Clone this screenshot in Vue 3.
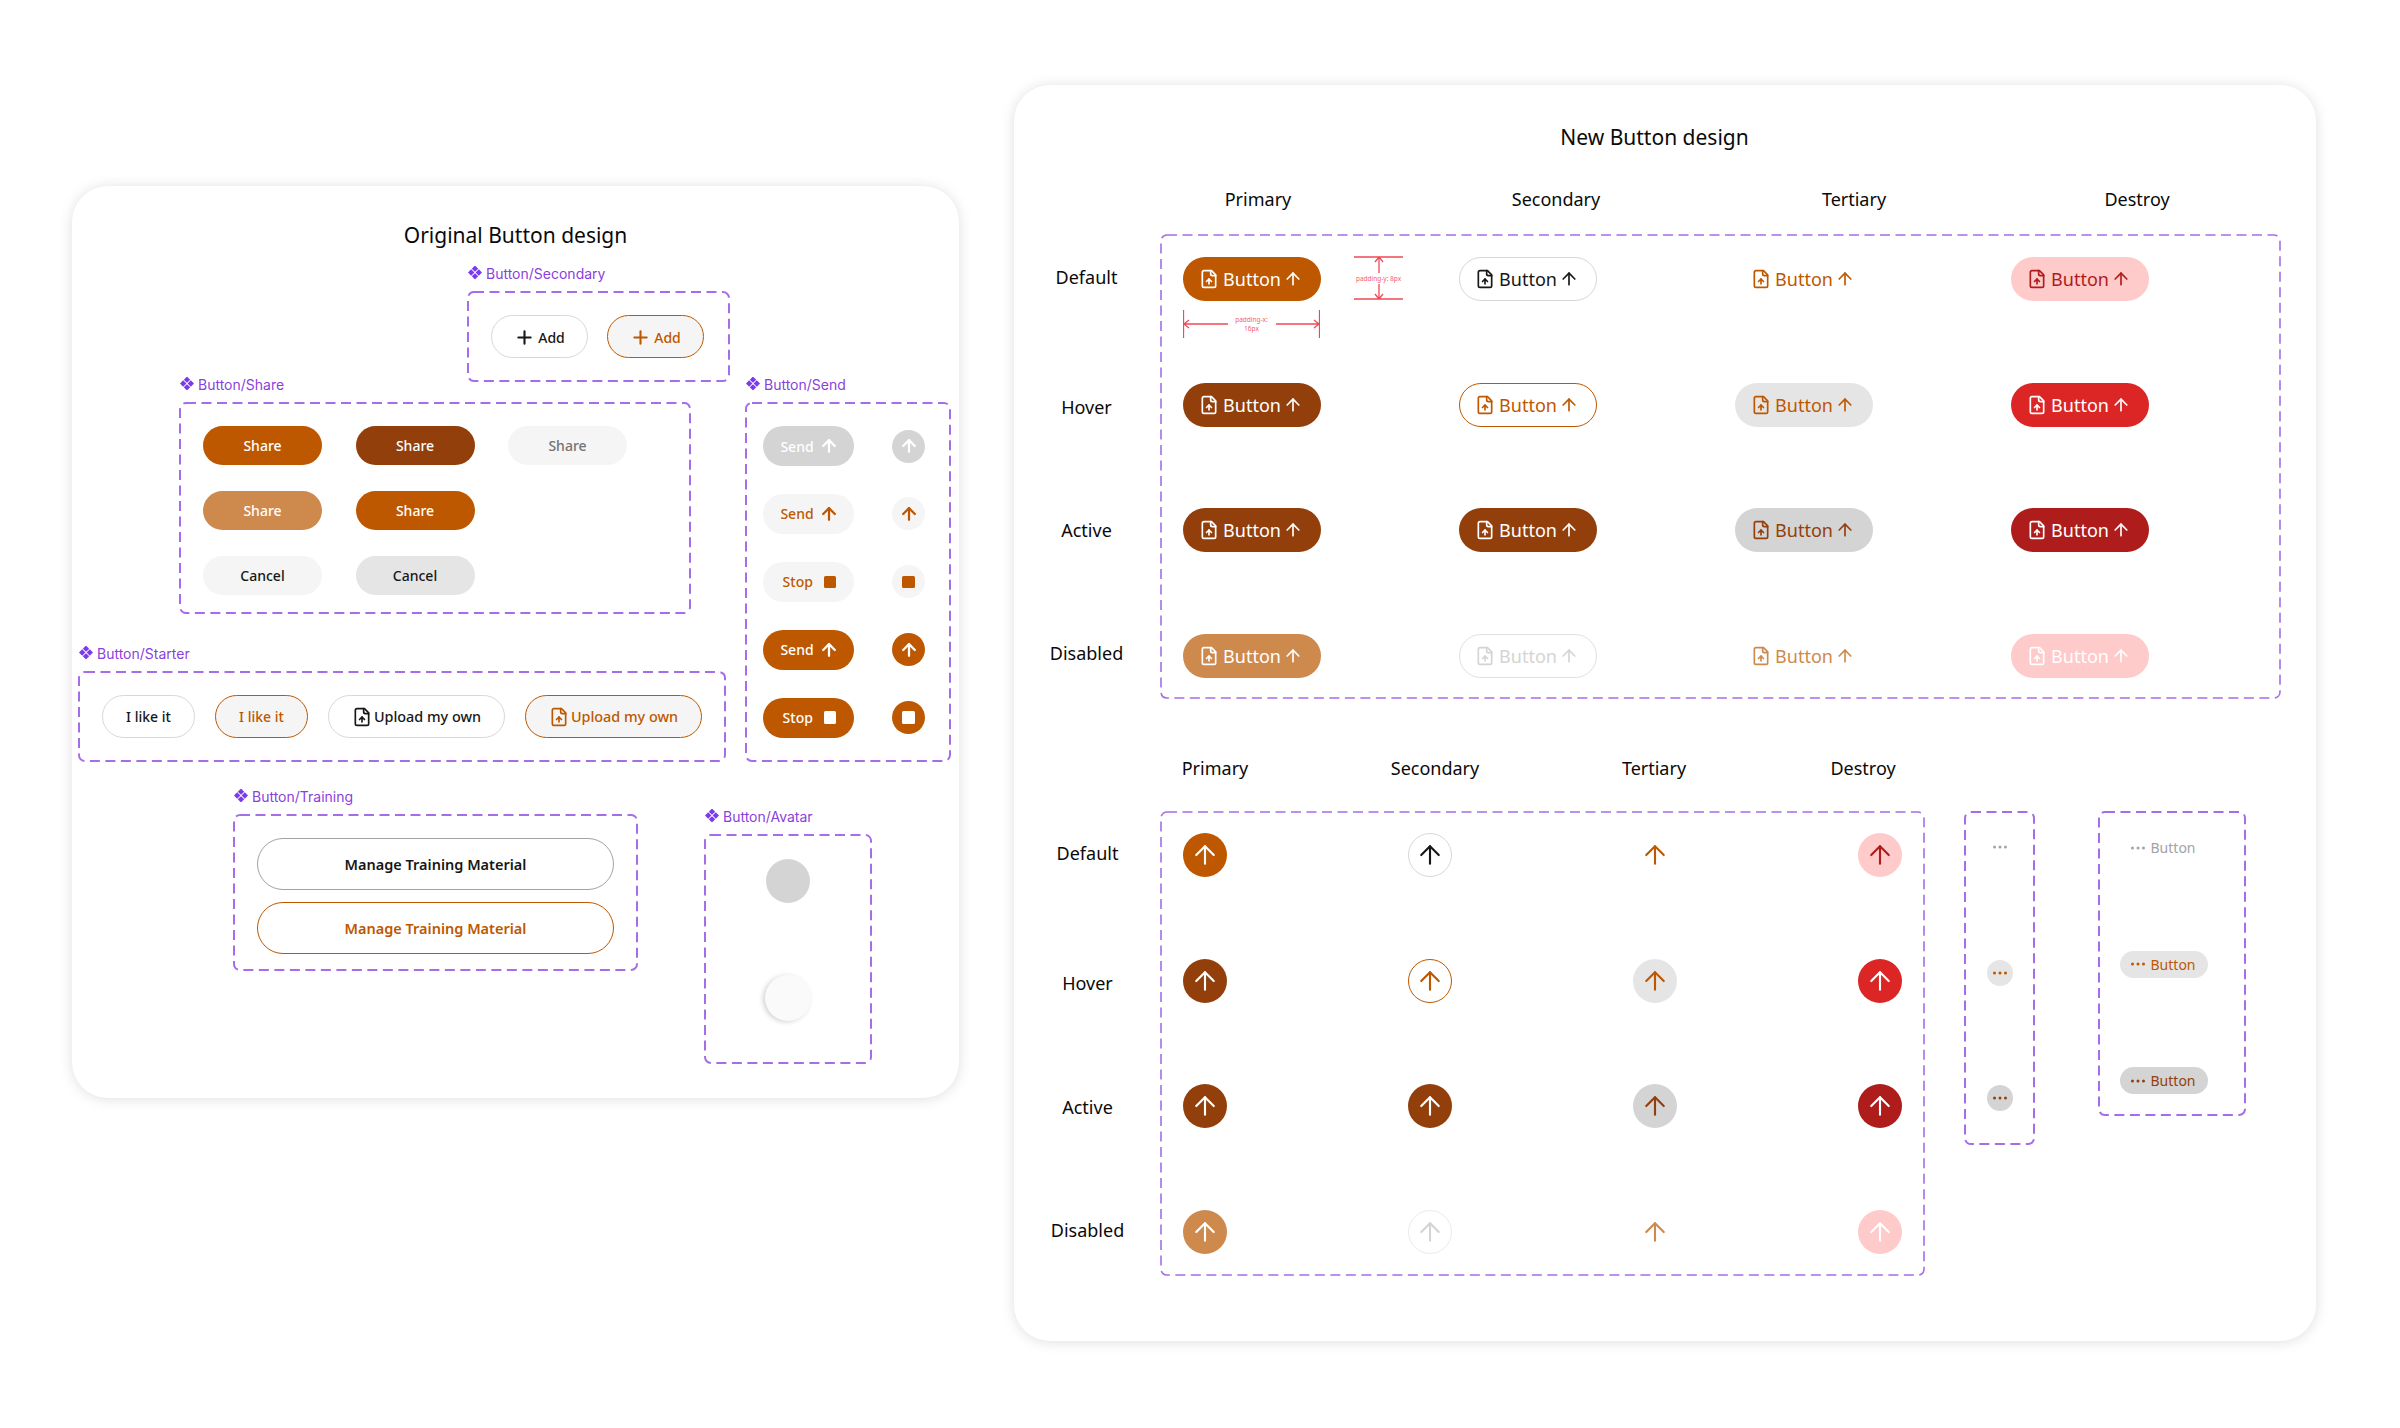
<template>
  <div class="page">
    <!-- shared icons -->
    <svg class="sprite" aria-hidden="true">
      <symbol id="file-up" viewBox="0 0 24 24">
        <path d="M15 2H6a2 2 0 0 0-2 2v16a2 2 0 0 0 2 2h12a2 2 0 0 0 2-2V7Z" />
        <path d="M14 2v4a2 2 0 0 0 2 2h4" />
        <path d="M12 18v-6" />
        <path d="m9 15 3-3 3 3" />
      </symbol>
      <symbol id="arrow-up" viewBox="0 0 24 24">
        <path d="M12 19V5" />
        <path d="m5 12 7-7 7 7" />
      </symbol>
      <symbol id="plus" viewBox="0 0 24 24">
        <path d="M5 12h14" />
        <path d="M12 5v14" />
      </symbol>
      <symbol id="dots" viewBox="0 0 16 16">
        <circle cx="2.5" cy="8" r="1.5" />
        <circle cx="8" cy="8" r="1.5" />
        <circle cx="13.5" cy="8" r="1.5" />
      </symbol>
      <symbol id="component" viewBox="0.4 0.4 13.2 13.2">
        <path d="M7 .4 10 3.4 7 6.4 4 3.4Z" />
        <path d="M3.4 4 6.4 7 3.4 10 .4 7Z" />
        <path d="M10.6 4 13.6 7 10.6 10 7.6 7Z" />
        <path d="M7 7.6 10 10.6 7 13.6 4 10.6Z" />
      </symbol>
    </svg>

    <!-- Original design -->
    <section class="card card-old">
      <h2 class="title">Original Button design</h2>

      <div class="set set-secondary">
        <div class="tag"><svg class="tag-ic"><use href="#component" /></svg>Button/Secondary</div>
        <div class="box box-secondary">
          <svg class="dash"><rect width="100%" height="100%" rx="6" /></svg>
          <button v-for="c in addButtons" :key="c" class="pill add" :class="c">
            <svg class="ic ic-plus"><use href="#plus" /></svg>Add
          </button>
        </div>
      </div>

      <div class="set set-share">
        <div class="tag"><svg class="tag-ic"><use href="#component" /></svg>Button/Share</div>
        <div class="box box-share">
          <svg class="dash"><rect width="100%" height="100%" rx="6" /></svg>
          <template v-for="(s, i) in shareButtons" :key="i">
            <button v-if="s" class="pill share" :class="s.cls">{{ s.text }}</button>
            <span v-else></span>
          </template>
        </div>
      </div>

      <div class="set set-send">
        <div class="tag"><svg class="tag-ic"><use href="#component" /></svg>Button/Send</div>
        <div class="box box-send">
          <svg class="dash"><rect width="100%" height="100%" rx="6" /></svg>
          <template v-for="s in sendButtons" :key="s.key">
            <button class="pill send" :class="s.cls">
              <span>{{ s.text }}</span>
              <span v-if="s.stop" class="square"></span>
              <svg v-else class="ic ic-bold"><use href="#arrow-up" /></svg>
            </button>
            <button class="pill send-round" :class="s.cls">
              <span v-if="s.stop" class="square"></span>
              <svg v-else class="ic ic-bold"><use href="#arrow-up" /></svg>
            </button>
          </template>
        </div>
      </div>

      <div class="set set-starter">
        <div class="tag"><svg class="tag-ic"><use href="#component" /></svg>Button/Starter</div>
        <div class="box box-starter">
          <svg class="dash"><rect width="100%" height="100%" rx="6" /></svg>
          <button class="pill starter like add-plain">I like it</button>
          <button class="pill starter like add-orange">I like it</button>
          <button class="pill starter upload add-plain">
            <svg class="ic"><use href="#file-up" /></svg>Upload my own
          </button>
          <button class="pill starter upload add-orange">
            <svg class="ic"><use href="#file-up" /></svg>Upload my own
          </button>
        </div>
      </div>

      <div class="set set-training">
        <div class="tag"><svg class="tag-ic"><use href="#component" /></svg>Button/Training</div>
        <div class="box box-training">
          <svg class="dash"><rect width="100%" height="100%" rx="6" /></svg>
          <button class="pill training training-plain">Manage Training Material</button>
          <button class="pill training training-orange">Manage Training Material</button>
        </div>
      </div>

      <div class="set set-avatar">
        <div class="tag"><svg class="tag-ic"><use href="#component" /></svg>Button/Avatar</div>
        <div class="box box-avatar">
          <svg class="dash"><rect width="100%" height="100%" rx="6" /></svg>
          <span class="avatar avatar-grey"></span>
          <span class="avatar avatar-light"></span>
        </div>
      </div>
    </section>

    <!-- New design -->
    <section class="card card-new">
      <h2 class="title title-new">New Button design</h2>

      <div class="heads heads-text">
        <span v-for="h in variants" :key="h">{{ h }}</span>
      </div>
      <div class="group group-text">
        <div class="labels labels-text">
          <span v-for="l in textLabels" :key="l.name" class="label" :style="{ marginTop: l.gap + 'px' }">{{ l.name }}</span>
        </div>
        <div class="box box-text">
          <svg class="dash"><rect width="100%" height="100%" rx="6" /></svg>
          <button v-for="(c, i) in stateClasses" :key="i" class="pill btn" :class="c">
            <svg class="ic"><use href="#file-up" /></svg>
            <span>Button</span>
            <svg class="ic ic-tail"><use href="#arrow-up" /></svg>
          </button>

          <div class="note note-y">
            <svg class="note-lines" width="49" height="44">
              <path d="M0 1h49M0 43h49M25 1v41M21 6l4-5 4 5M21 38l4 5 4-5" />
            </svg>
            <span class="note-text">padding-y: 8px</span>
          </div>
          <div class="note note-x">
            <svg class="note-lines" width="137" height="28">
              <path d="M.5 0v28M136.5 0v28M1 14h44M93 14h43M6 10l-5 4 5 4M131 10l5 4-5 4" />
            </svg>
            <span class="note-text">padding-x:<br />16px</span>
          </div>
        </div>
      </div>

      <div class="heads heads-icon">
        <span v-for="h in variants" :key="h">{{ h }}</span>
      </div>
      <div class="group group-icon">
        <div class="labels">
          <span v-for="l in iconLabels" :key="l.name" class="label" :style="{ marginTop: l.gap + 'px' }">{{ l.name }}</span>
        </div>
        <div class="box box-icon">
          <svg class="dash"><rect width="100%" height="100%" rx="6" /></svg>
          <button v-for="(c, i) in stateClasses" :key="i" class="pill round" :class="c">
            <svg class="ic ic-lg"><use href="#arrow-up" /></svg>
          </button>
        </div>
        <div class="box box-dots">
          <svg class="dash"><rect width="100%" height="100%" rx="6" /></svg>
          <button v-for="c in moreClasses" :key="c" class="pill more-round" :class="c">
            <svg class="ic-dots"><use href="#dots" /></svg>
          </button>
        </div>
        <div class="box box-more">
          <svg class="dash"><rect width="100%" height="100%" rx="6" /></svg>
          <button v-for="c in moreClasses" :key="c" class="pill more" :class="c">
            <svg class="ic-dots"><use href="#dots" /></svg>
            <span>Button</span>
          </button>
        </div>
      </div>
    </section>
  </div>
</template>

<script setup>
const variants = ['Primary', 'Secondary', 'Tertiary', 'Destroy']

const textLabels = [
  { name: 'Default', gap: 30 },
  { name: 'Hover', gap: 106 },
  { name: 'Active', gap: 99 },
  { name: 'Disabled', gap: 99 }
]

const iconLabels = [
  { name: 'Default', gap: 29 },
  { name: 'Hover', gap: 106 },
  { name: 'Active', gap: 100 },
  { name: 'Disabled', gap: 99 }
]

// row by row: primary, secondary, tertiary, destroy
const stateClasses = [
  'primary', 'outline', 'ghost', 'red-soft',
  'dark', 'outline-orange', 'ghost-hover', 'red',
  'dark', 'dark', 'ghost-active', 'red-dark',
  'soft', 'outline-off', 'ghost-off', 'red-off'
]

const moreClasses = ['more-default', 'more-hover', 'more-active']

const addButtons = ['add-plain', 'add-orange']

const shareButtons = [
  { text: 'Share', cls: 'primary' },
  { text: 'Share', cls: 'dark' },
  { text: 'Share', cls: 'muted' },
  { text: 'Share', cls: 'soft' },
  { text: 'Share', cls: 'primary' },
  null,
  { text: 'Cancel', cls: 'cancel' },
  { text: 'Cancel', cls: 'cancel-hover' },
  null
]

const sendButtons = [
  { key: 1, text: 'Send', cls: 'send-off' },
  { key: 2, text: 'Send', cls: 'send-light' },
  { key: 3, text: 'Stop', cls: 'send-light', stop: true },
  { key: 4, text: 'Send', cls: 'primary' },
  { key: 5, text: 'Stop', cls: 'primary', stop: true }
]
</script>

<style scoped>
.page {
  display: flex;
  align-items: flex-start;
  gap: 55px;
  height: 1428px;
  padding-left: 72px;
  box-sizing: border-box;
  background: #fff;
  overflow: hidden;
  font-family: "Noto Sans", sans-serif;
  color: #0a0a0a;
}

.sprite {
  position: absolute;
  width: 0;
  height: 0;
}

.card {
  position: relative;
  flex: none;
  background: #fff;
  border-radius: 36px;
  box-shadow: 0 1px 14px rgba(0, 0, 0, 0.13);
  box-sizing: border-box;
}

.card-old {
  width: 887px;
  height: 912px;
  margin-top: 186px;
}

.card-new {
  width: 1302px;
  height: 1256px;
  margin-top: 85px;
}

.title {
  margin: 35px 0 0;
  font-size: 21px;
  font-weight: 400;
  line-height: 28px;
  text-align: center;
}

.title-new {
  margin-top: 38px;
  padding-right: 21px;
}

/* component sets sit freely on the canvas */
.set {
  position: absolute;
}

.set-secondary { left: 396px; top: 78px; }
.set-share { left: 108px; top: 189px; }
.set-send { left: 674px; top: 189px; }
.set-starter { left: 7px; top: 458px; }
.set-training { left: 162px; top: 601px; }
.set-avatar { left: 633px; top: 621px; }

.tag {
  display: flex;
  align-items: center;
  gap: 4px;
  height: 20px;
  margin-bottom: 8px;
  transform: translateY(-1.5px);
  font-family: Inter, sans-serif;
  font-size: 14px;
  color: #8b3fdc;
  white-space: nowrap;
}

.tag-ic {
  width: 14px;
  height: 14px;
  flex: none;
  fill: #7c3aed;
}

.box {
  position: relative;
  box-sizing: border-box;
}

.dash {
  position: absolute;
  inset: 0;
  width: 100%;
  height: 100%;
  overflow: visible;
  pointer-events: none;
}

.dash rect {
  fill: none;
  stroke: #a56ee8;
  stroke-width: 2;
  stroke-dasharray: 10 5.5;
}

.box-text .dash rect,
.box-icon .dash rect {
  stroke-width: 1.6;
}

.pill {
  display: flex;
  align-items: center;
  justify-content: center;
  padding: 0;
  border: 1.5px solid transparent;
  border-radius: 999px;
  background: transparent;
  box-sizing: border-box;
  font: inherit;
  color: inherit;
}

.ic {
  width: 20px;
  height: 20px;
  flex: none;
  fill: none;
  stroke: currentColor;
  stroke-width: 2;
  stroke-linecap: round;
  stroke-linejoin: round;
}

.ic-bold { stroke-width: 2.7; }
.ic-lg { width: 30px; height: 30px; stroke-width: 1.7; }
.ic-plus { width: 21px; height: 21px; stroke-width: 2.4; }
.ic-tail { margin: 0 1.5px 0 -1.5px; }

.ic-dots {
  width: 16px;
  height: 16px;
  flex: none;
  fill: currentColor;
}

/* state colours */
.primary { background: #bd5800; color: #fff; }
.dark { background: #923f0c; color: #fff; }
.soft { background: #ce894d; color: #fff; }
.outline { background: #fff; border-color: #d8d8d8; color: #171717; }
.outline-orange { background: #fff; border-color: #bd5800; color: #bd5800; }
.outline-off { background: #fff; border-color: #e0e0e0; color: #d4d4d4; }
.ghost { color: #bd5800; }
.ghost-hover { background: #e5e5e5; color: #bd5800; }
.ghost-active { background: #d4d4d4; color: #923f0c; }
.ghost-off { color: #ce894d; }
.red-soft { background: #fecaca; color: #ae1c1c; }
.red { background: #dc2626; color: #fff; }
.red-dark { background: #ae1c1c; color: #fff; }
.red-off { background: #fecaca; color: #fff; }
.muted { background: #f5f5f5; color: #737373; }
.cancel { background: #f5f5f5; color: #171717; }
.cancel-hover { background: #e5e5e5; color: #171717; }
.send-off { background: #d4d4d4; color: #fff; }
.send-light { background: #f5f5f5; color: #bd5800; }
.add-plain { background: #fff; border-color: #d8d8d8; color: #171717; }
.add-orange { background: #f5f5f5; border-color: #bd5800; color: #bd5800; }

.box-secondary {
  display: flex;
  gap: 19px;
  width: 261px;
  height: 89px;
  padding: 23px;
}

.add {
  gap: 3px;
  width: 97px;
  height: 43px;
  padding-top: 1px;
  font-size: 14px;
  font-weight: 500;
}

.box-share {
  display: grid;
  grid-template-columns: repeat(3, 119px);
  grid-auto-rows: 38.5px;
  gap: 26.5px 33.5px;
  width: 510px;
  height: 210px;
  padding: 23px;
}

.share {
  font-size: 14px;
  font-weight: 500;
}

.box-send {
  display: grid;
  grid-template-columns: 91px 33px;
  grid-auto-rows: 40px;
  gap: 27.9px 38px;
  width: 204px;
  height: 358px;
  padding: 23px 17px;
  justify-items: center;
  align-items: center;
}

.send {
  gap: 5px;
  width: 91px;
  height: 40px;
  padding-left: 2px;
  font-size: 14px;
  font-weight: 500;
}

.send-round {
  width: 33px;
  height: 33px;
}

.square {
  flex: none;
  width: 12.5px;
  height: 12.5px;
  margin-left: 6px;
  border-radius: 1.5px;
  background: currentColor;
}

.send-round .square {
  margin: 0;
}

.box-starter {
  display: flex;
  gap: 20px;
  width: 646px;
  height: 89px;
  padding: 23px;
}

.starter {
  gap: 2px;
  height: 43px;
  font-size: 14px;
  font-weight: 500;
}

.like { width: 93px; }
.upload { width: 177px; font-size: 14.4px; }

.box-training {
  display: flex;
  flex-direction: column;
  gap: 12px;
  width: 403px;
  height: 155px;
  padding: 23px 0 0 23px;
}

.training {
  flex: none;
  width: 357px;
  height: 52px;
  font-size: 14.5px;
  font-weight: 600;
}

.training-plain { background: #fff; border-color: #a3a3a3; color: #171717; }
.training-orange { background: #fff; border-color: #bd5800; color: #bd5800; }

.box-avatar {
  display: flex;
  flex-direction: column;
  align-items: center;
  gap: 72px;
  width: 166px;
  height: 228px;
  padding-top: 24px;
}

.avatar {
  display: block;
  border-radius: 50%;
}

.avatar-grey {
  width: 44px;
  height: 44px;
  background: #d4d4d4;
}

.avatar-light {
  width: 46px;
  height: 46px;
  background: #fafafa;
  box-shadow: -2px 1px 5px rgba(0, 0, 0, 0.18);
}

/* new design columns */
.heads {
  display: grid;
  font-size: 18px;
  line-height: 24px;
  text-align: center;
}

.heads-text {
  grid-template-columns: 298px 298px 298px 268px;
  margin: 36px 0 0 95px;
}

.heads-icon {
  grid-template-columns: 220px 220px 218px 200px;
  margin: 58px 0 0 91px;
}

.group {
  display: flex;
  align-items: flex-start;
}

.group-text { margin-top: 24px; }
.group-icon { margin-top: 32px; }

.labels {
  display: flex;
  flex-direction: column;
  flex: none;
  width: 147px;
  box-sizing: border-box;
}

.labels-text {
  padding-right: 2px;
}

.label {
  font-size: 18px;
  line-height: 24px;
  text-align: center;
}

.box-text {
  display: grid;
  grid-template-columns: repeat(4, 138px);
  grid-auto-rows: 44px;
  gap: 81.67px 138px;
  width: 1119px;
  height: 463px;
  padding: 22px;
}

.btn {
  gap: 4px;
  width: 138px;
  height: 44px;
  font-size: 18px;
  white-space: nowrap;
}

.box-icon {
  display: grid;
  grid-template-columns: repeat(4, 44px);
  grid-auto-rows: 44px;
  gap: 81.67px 181px;
  width: 763px;
  height: 463px;
  padding: 21px 22px;
}

.round {
  width: 44px;
  height: 44px;
}

.outline-off.round {
  border-color: #ebebeb;
}

.box-dots {
  display: flex;
  flex-direction: column;
  align-items: center;
  gap: 99.7px;
  width: 69px;
  height: 332px;
  margin-left: 41px;
  padding-top: 22px;
}

.more-round {
  width: 26px;
  height: 26px;
  border: 0;
}

.box-more {
  display: flex;
  flex-direction: column;
  align-items: flex-start;
  gap: 89.5px;
  width: 146px;
  height: 303px;
  margin-left: 65px;
  padding: 22px 0 0 21px;
}

.more {
  gap: 5px;
  width: 88px;
  height: 27px;
  padding: 0 13px 0 10px;
  border: 0;
  font-size: 14px;
}

.more-default { color: #a3a3a3; }
.more-hover { background: #e5e5e5; color: #bd5800; }
.more-active { background: #d4d4d4; color: #923f0c; }

/* redline annotations over the first primary button */
.note {
  position: absolute;
  display: flex;
  align-items: center;
  justify-content: center;
}

.note-y {
  left: 193px;
  top: 21px;
  width: 49px;
  height: 44px;
}

.note-x {
  left: 22px;
  top: 75px;
  width: 137px;
  height: 28px;
}

.note-lines {
  position: absolute;
  inset: 0;
  fill: none;
  stroke: #f04a55;
  stroke-width: 1.3;
}

.note-text {
  position: relative;
  padding: 1px 0;
  background: #fff;
  color: #f4606a;
  font-size: 6.5px;
  line-height: 9px;
  text-align: center;
  white-space: nowrap;
}
</style>
